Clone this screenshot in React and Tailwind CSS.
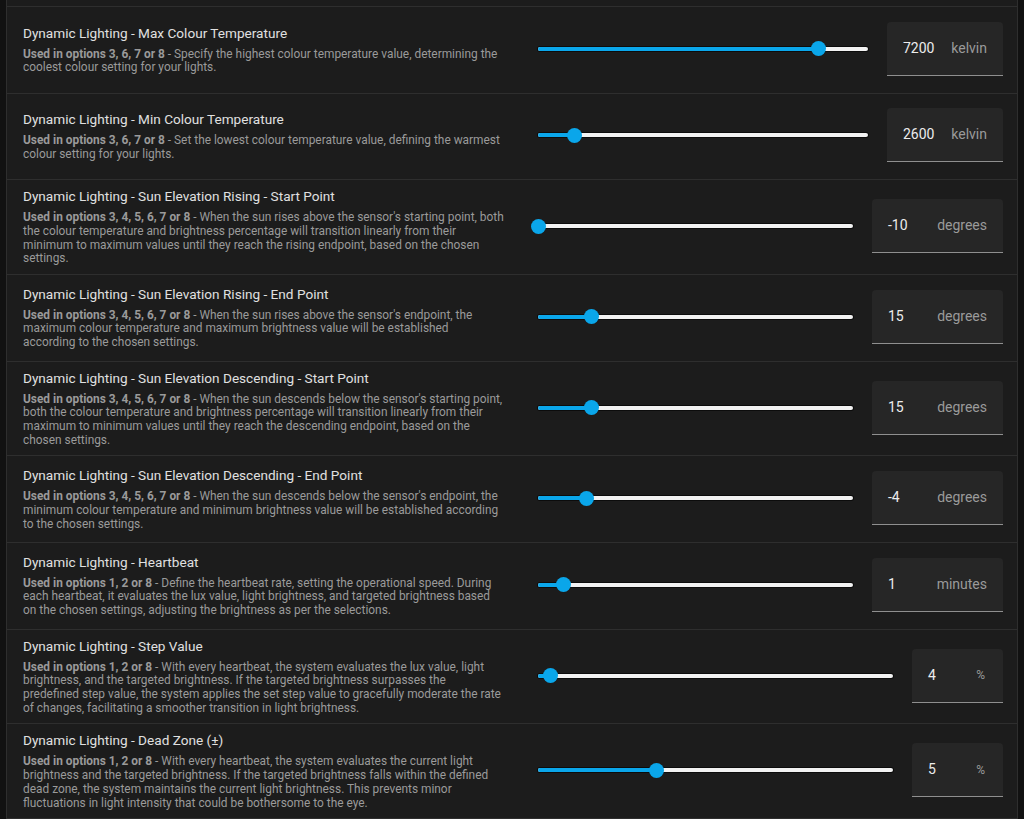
import React from 'react';

const rows = [
  {
    title: 'Dynamic Lighting - Max Colour Temperature',
    used: 'Used in options 3, 6, 7 or 8',
    lines: [
      'Specify the highest colour temperature value, determining the',
      'coolest colour setting for your lights.',
    ],
    value: '7200', unit: 'kelvin', pct: 85, box: 'w-[116px]',
  },
  {
    title: 'Dynamic Lighting - Min Colour Temperature',
    used: 'Used in options 3, 6, 7 or 8',
    lines: [
      'Set the lowest colour temperature value, defining the warmest',
      'colour setting for your lights.',
    ],
    value: '2600', unit: 'kelvin', pct: 11, box: 'w-[116px]',
  },
  {
    title: 'Dynamic Lighting - Sun Elevation Rising - Start Point',
    used: 'Used in options 3, 4, 5, 6, 7 or 8',
    lines: [
      "When the sun rises above the sensor's starting point, both",
      'the colour temperature and brightness percentage will transition linearly from their',
      'minimum to maximum values until they reach the rising endpoint, based on the chosen',
      'settings.',
    ],
    value: '-10', unit: 'degrees', pct: 0, box: 'w-[131px]',
  },
  {
    title: 'Dynamic Lighting - Sun Elevation Rising - End Point',
    used: 'Used in options 3, 4, 5, 6, 7 or 8',
    lines: [
      "When the sun rises above the sensor's endpoint, the",
      'maximum colour temperature and maximum brightness value will be established',
      'according to the chosen settings.',
    ],
    value: '15', unit: 'degrees', pct: 17, box: 'w-[131px]',
  },
  {
    title: 'Dynamic Lighting - Sun Elevation Descending - Start Point',
    used: 'Used in options 3, 4, 5, 6, 7 or 8',
    lines: [
      "When the sun descends below the sensor's starting point,",
      'both the colour temperature and brightness percentage will transition linearly from their',
      'maximum to minimum values until they reach the descending endpoint, based on the',
      'chosen settings.',
    ],
    value: '15', unit: 'degrees', pct: 17, box: 'w-[131px]',
  },
  {
    title: 'Dynamic Lighting - Sun Elevation Descending - End Point',
    used: 'Used in options 3, 4, 5, 6, 7 or 8',
    lines: [
      "When the sun descends below the sensor's endpoint, the",
      'minimum colour temperature and minimum brightness value will be established according',
      'to the chosen settings.',
    ],
    value: '-4', unit: 'degrees', pct: 15.5, box: 'w-[131px]',
  },
  {
    title: 'Dynamic Lighting - Heartbeat',
    used: 'Used in options 1, 2 or 8',
    lines: [
      'Define the heartbeat rate, setting the operational speed. During',
      'each heartbeat, it evaluates the lux value, light brightness, and targeted brightness based',
      'on the chosen settings, adjusting the brightness as per the selections.',
    ],
    value: '1', unit: 'minutes', pct: 8, box: 'w-[131px]',
  },
  {
    title: 'Dynamic Lighting - Step Value',
    used: 'Used in options 1, 2 or 8',
    lines: [
      'With every heartbeat, the system evaluates the lux value, light',
      'brightness, and the targeted brightness. If the targeted brightness surpasses the',
      'predefined step value, the system applies the set step value to gracefully moderate the rate',
      'of changes, facilitating a smoother transition in light brightness.',
    ],
    value: '4', unit: '%', pct: 3.4, box: 'w-[91px]',
  },
  {
    title: 'Dynamic Lighting - Dead Zone (±)',
    used: 'Used in options 1, 2 or 8',
    lines: [
      'With every heartbeat, the system evaluates the current light',
      'brightness and the targeted brightness. If the targeted brightness falls within the defined',
      'dead zone, the system maintains the current light brightness. This prevents minor',
      'fluctuations in light intensity that could be bothersome to the eye.',
    ],
    value: '5', unit: '%', pct: 33.5, box: 'w-[91px]',
  },
];

const Slider = ({ pct }) => (
  <div className="flex-1 flex items-center pl-[33px] pr-[19px]">
    <div className="relative w-full h-[4px] rounded-full bg-[#f2f2f2] shadow-[0_0_0_1px_#0c0c0c]">
      <div className="absolute left-0 top-0 h-full rounded-full bg-[#0aa6ea]" style={{ width: `${pct}%` }} />
      <div
        className="absolute top-1/2 w-[15px] h-[15px] -ml-[7.5px] -mt-[7.5px] rounded-full bg-[#0aa6ea]"
        style={{ left: `${pct}%` }}
      />
    </div>
  </div>
);

const Row = ({ row }) => (
  <div className="flex items-center min-h-[86.6px] pt-[6px] pb-[8px] pl-4 pr-[14px] border-t border-[#2e2e2e]">
    <div className="w-[482px] shrink-0">
      <div className="text-[13.6px] leading-[20px] mb-[5px] text-[#e0e0e0]">{row.title}</div>
      <div className="text-[11.9px] leading-[13.7px] text-[#9a9a9a] whitespace-nowrap">
        {row.lines.map((line, i) => (
          <div key={i}>
            {i === 0 && <span className="font-bold">{row.used} </span>}
            {i === 0 ? `- ${line}` : line}
          </div>
        ))}
      </div>
    </div>
    <Slider pct={row.pct} />
    <div className={`${row.box} shrink-0 h-[54px] flex items-center justify-between pl-4 pr-4 bg-[#262626] rounded-t-[4px] border-b border-[#8f8f8f]`}>
      <span className="text-[14px] text-[#ececec]">{row.value}</span>
      <span className={row.unit === '%' ? 'text-[12px] text-[#9a9a9a] pr-[2px]' : 'text-[14px] text-[#9a9a9a]'}>{row.unit}</span>
    </div>
  </div>
);

export default function App() {
  return (
    <div className="w-[1024px] h-[819px] overflow-hidden bg-[#111111] px-[6px]" style={{ fontFamily: 'Roboto, "Noto Sans", sans-serif' }}>
      <div className="bg-[#1c1c1c] border-x border-[#2e2e2e]">
        <div className="h-[6px]" />
        {rows.map((row) => (
          <Row key={row.title} row={row} />
        ))}
        <div className="border-t border-[#2e2e2e] h-[20px]" />
      </div>
    </div>
  );
}
